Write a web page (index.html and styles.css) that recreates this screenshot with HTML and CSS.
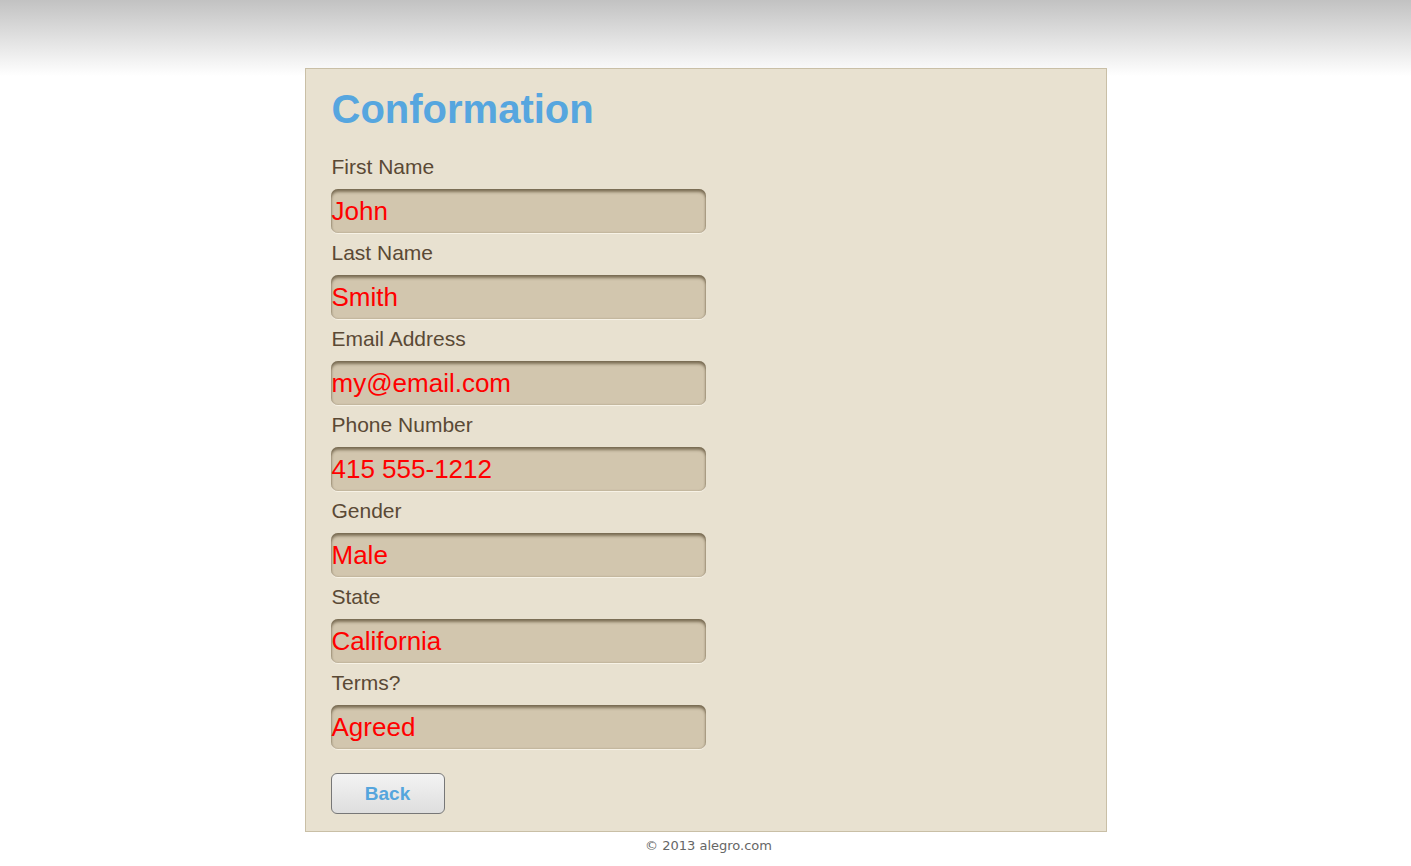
FILE: index.html
```html
<!DOCTYPE html>
<html>
<head>
<meta charset="utf-8">
<title>Conformation</title>
<link rel="stylesheet" href="styles.css">
</head>
<body>
<div class="page">
  <div class="card">
    <h1 class="title">Conformation</h1>
    <div class="field">
      <div class="label">First Name</div>
      <div class="value">John</div>
    </div>
    <div class="field">
      <div class="label">Last Name</div>
      <div class="value">Smith</div>
    </div>
    <div class="field">
      <div class="label">Email Address</div>
      <div class="value">my@email.com</div>
    </div>
    <div class="field">
      <div class="label">Phone Number</div>
      <div class="value">415 555-1212</div>
    </div>
    <div class="field">
      <div class="label">Gender</div>
      <div class="value">Male</div>
    </div>
    <div class="field">
      <div class="label">State</div>
      <div class="value">California</div>
    </div>
    <div class="field">
      <div class="label">Terms?</div>
      <div class="value">Agreed</div>
    </div>
    <button class="back">Back</button>
  </div>
  <div class="footer">© 2013 alegro.com</div>
</div>
</body>
</html>
```

FILE: styles.css
```css
html, body {
  margin: 0;
  padding: 0;
}
body {
  background: #ffffff linear-gradient(to bottom, #c2c2c2 0px, #ffffff 76px) no-repeat;
  min-height: 866px;
  font-family: "Liberation Sans", Arial, sans-serif;
}
.page {
  padding-top: 68px;
}
.card {
  margin: 0 auto;
  background: #e8e1d0;
  border: 1px solid #c9bfa6;
  padding: 17px 25px 17px 25px;
  box-sizing: border-box;
  width: 802px;
}
.title {
  margin: 0;
  font-size: 40px;
  line-height: 46px;
  font-weight: bold;
  color: #56a6df;
  padding-left: 1px;
}
.field {
  display: flex;
  flex-direction: column;
  padding-top: 8px;
}
.field:first-of-type {
  padding-top: 23px;
}
.label {
  font-size: 21px;
  line-height: 24px;
  color: #5a4935;
  padding-left: 1px;
}
.value {
  margin-top: 10px;
  width: 375px;
  height: 44px;
  box-sizing: border-box;
  background: #d2c6ae;
  border-radius: 7px;
  box-shadow: inset 0 3px 3px rgba(60, 45, 20, 0.55), inset 0 0 2px rgba(60, 45, 20, 0.35), 0 1px 0 #f7f2e6;
  color: #ff0000;
  font-size: 26px;
  line-height: 44px;
  padding-left: 1px;
  white-space: nowrap;
}
.back {
  display: block;
  margin-top: 24px;
  width: 114px;
  height: 41px;
  border: 1px solid #777777;
  border-radius: 6px;
  background: linear-gradient(to bottom, #f3f3f3, #dedede);
  color: #55a5dd;
  font-family: "Liberation Sans", Arial, sans-serif;
  font-weight: bold;
  font-size: 19px;
  padding: 0;
  cursor: pointer;
}
.footer {
  text-align: center;
  font-family: "DejaVu Sans", Verdana, sans-serif;
  font-size: 13px;
  line-height: 16px;
  color: #666666;
  margin-top: 6px;
  padding-left: 6px;
}
```
